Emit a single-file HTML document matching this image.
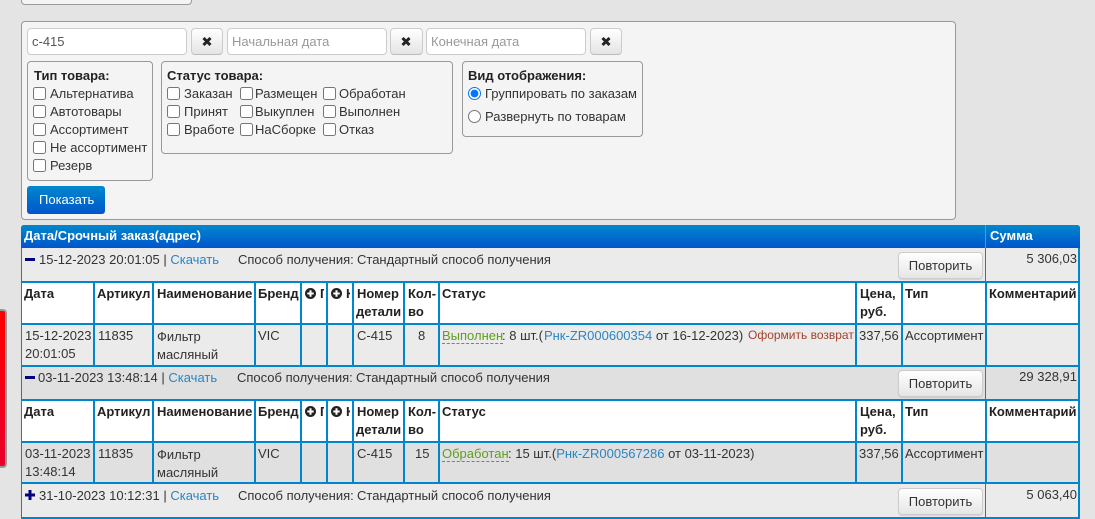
<!DOCTYPE html>
<html lang="ru"><head><meta charset="utf-8"><title>Заказы</title>
<style>
html,body{margin:0;padding:0}
body{width:1095px;height:519px;overflow:hidden;position:relative;background:#e4e4e4;font:13px/18px "Liberation Sans",Arial,sans-serif;color:#333}
div,span.t,a.t,b.t,input,svg{position:absolute}
.t{white-space:nowrap;position:absolute}
b.t{color:#222}
.box{box-sizing:border-box;border:1px solid #999;border-radius:4px;background:#f4f4f4}
.in{box-sizing:border-box;top:28px;height:27px;border:1px solid #ccc;border-radius:4px;background:#fff;padding-left:4px;line-height:26px;color:#999;white-space:nowrap}
.x{box-sizing:border-box;top:28px;height:27px;border:1px solid #ccc;border-bottom-color:#bbb;border-radius:4px;background:linear-gradient(#fff,#e4e4e4)}
.x svg{left:9px;top:7px}
input{margin:0;width:13px;height:13px}
.bl{background:linear-gradient(#0088cc,#0055cc)}
.c{background:#fff}
.rep{box-sizing:border-box;left:898px;width:85px;height:27px;border:1px solid #ccc;border-radius:4px;background:linear-gradient(#fff,#e6e6e6);text-align:center;line-height:25px;color:#333;box-shadow:0 1px 1px rgba(0,0,0,.1)}
a{color:#2a85c4;text-decoration:none}
.g{color:#5f9e1e;border-bottom:1px dashed #5f9e1e;line-height:15px;height:15px}
.sum{right:18px;text-align:right}
</style></head><body>

<div class="box" style="left:21px;top:-20px;width:171px;height:25px"></div>
<div style="left:0;top:309px;width:7px;height:159px;box-sizing:border-box;border:2px solid #999;border-left:0;border-radius:0 4px 4px 0;background:linear-gradient(#ff0000,#e8002c)"></div>

<div class="box" style="left:21px;top:21px;width:935px;height:199px"></div>
<div class="in" style="left:27px;width:160px;color:#555">c-415</div>
<div class="x" style="left:191px;width:32px"><svg width="12" height="11" viewBox="0 0 12 11"><path d="M2.5 2l7 7M9.5 2l-7 7" stroke="#222" stroke-width="3" fill="none"/></svg></div>
<div class="in" style="left:227px;width:160px">Начальная дата</div>
<div class="x" style="left:390px;width:33px"><svg width="12" height="11" viewBox="0 0 12 11"><path d="M2.5 2l7 7M9.5 2l-7 7" stroke="#222" stroke-width="3" fill="none"/></svg></div>
<div class="in" style="left:426px;width:160px">Конечная дата</div>
<div class="x" style="left:590px;width:32px"><svg width="12" height="11" viewBox="0 0 12 11"><path d="M2.5 2l7 7M9.5 2l-7 7" stroke="#222" stroke-width="3" fill="none"/></svg></div>

<div class="box" style="left:27px;top:61px;width:126px;height:120px"></div>
<b class="t" style="left:34px;top:67px">Тип товара:</b>
<input type="checkbox" style="left:33px;top:87px"><span class="t" style="left:50px;top:85px">Альтернатива</span>
<input type="checkbox" style="left:33px;top:105px"><span class="t" style="left:50px;top:103px">Автотовары</span>
<input type="checkbox" style="left:33px;top:123px"><span class="t" style="left:50px;top:121px">Ассортимент</span>
<input type="checkbox" style="left:33px;top:141px"><span class="t" style="left:50px;top:139px">Не ассортимент</span>
<input type="checkbox" style="left:33px;top:159px"><span class="t" style="left:50px;top:157px">Резерв</span>

<div class="box" style="left:161px;top:61px;width:292px;height:93px"></div>
<b class="t" style="left:167px;top:67px">Статус товара:</b>
<input type="checkbox" style="left:167px;top:87px"><span class="t" style="left:184px;top:85px">Заказан</span>
<input type="checkbox" style="left:240px;top:87px"><span class="t" style="left:255px;top:85px">Размещен</span>
<input type="checkbox" style="left:323px;top:87px"><span class="t" style="left:339px;top:85px">Обработан</span>
<input type="checkbox" style="left:167px;top:105px"><span class="t" style="left:184px;top:103px">Принят</span>
<input type="checkbox" style="left:240px;top:105px"><span class="t" style="left:255px;top:103px">Выкуплен</span>
<input type="checkbox" style="left:323px;top:105px"><span class="t" style="left:339px;top:103px">Выполнен</span>
<input type="checkbox" style="left:167px;top:123px"><span class="t" style="left:184px;top:121px">Вработе</span>
<input type="checkbox" style="left:240px;top:123px"><span class="t" style="left:255px;top:121px">НаСборке</span>
<input type="checkbox" style="left:323px;top:123px"><span class="t" style="left:339px;top:121px">Отказ</span>

<div class="box" style="left:462px;top:61px;width:181px;height:76px"></div>
<b class="t" style="left:468px;top:67px">Вид отображения:</b>
<input type="radio" name="v" checked style="left:468px;top:87px"><span class="t" style="left:485px;top:85px">Группировать по заказам</span>
<input type="radio" name="v" style="left:468px;top:110px"><span class="t" style="left:485px;top:108px">Развернуть по товарам</span>

<div class="bl" style="left:27px;top:186px;width:78px;height:28px;border-radius:3px"></div>
<span class="t" style="left:39px;top:191px;color:#fff">Показать</span>

<!-- table -->
<div style="left:21px;top:225px;width:1059px;height:294px;background:#0086cb;border-radius:3px 3px 0 0"></div>
<div class="bl" style="left:21px;top:225px;width:1059px;height:23px;border-radius:3px 3px 0 0"></div>
<div style="left:985px;top:225px;width:1px;height:23px;background:#3aa0dc"></div>
<b class="t" style="left:24px;top:227px;color:#fff">Дата/Срочный заказ(адрес)</b>
<b class="t" style="left:990px;top:227px;color:#fff">Сумма</b>

<!-- group 1 -->
<div style="left:22px;top:248px;width:963px;height:33px;background:#ebebeb"></div>
<div style="left:986px;top:248px;width:92px;height:33px;background:#ebebeb"></div>
<div style="left:25px;top:258px;width:10px;height:3px;background:#000080"></div>
<span class="t" style="left:39px;top:251px">15-12-2023 20:01:05 | <a href="#">Скачать</a></span>
<span class="t" style="left:238px;top:251px">Способ получения:</span>
<span class="t" style="left:357px;top:251px">Стандартный способ получения</span>
<div class="rep" style="top:252px">Повторить</div>
<span class="t sum" style="top:250px">5 306,03</span>

<div class="c" style="left:22px;top:283px;width:71px;height:40px"></div>
<div class="c" style="left:95px;top:283px;width:57px;height:40px"></div>
<div class="c" style="left:154px;top:283px;width:100px;height:40px"></div>
<div class="c" style="left:256px;top:283px;width:44px;height:40px"></div>
<div class="c" style="left:302px;top:283px;width:24px;height:40px"></div>
<div class="c" style="left:328px;top:283px;width:24px;height:40px"></div>
<div class="c" style="left:354px;top:283px;width:49px;height:40px"></div>
<div class="c" style="left:405px;top:283px;width:33px;height:40px"></div>
<div class="c" style="left:440px;top:283px;width:415px;height:40px"></div>
<div class="c" style="left:857px;top:283px;width:44px;height:40px"></div>
<div class="c" style="left:903px;top:283px;width:82px;height:40px"></div>
<div class="c" style="left:987px;top:283px;width:91px;height:40px"></div>
<b class="t" style="left:24px;top:285px">Дата</b>
<b class="t" style="left:97px;top:285px">Артикул</b>
<b class="t" style="left:157px;top:285px">Наименование</b>
<b class="t" style="left:258px;top:285px">Бренд</b>
<svg style="left:305px;top:288px" width="11" height="11" viewBox="0 0 12 12"><circle cx="6" cy="6" r="6" fill="#222"/><path d="M6 2.5v7M2.5 6h7" stroke="#fff" stroke-width="2.2"/></svg>
<div style="left:320px;top:285px;width:4px;height:18px;overflow:hidden"><b class="t" style="left:0;top:0">Г</b></div>
<svg style="left:331px;top:288px" width="11" height="11" viewBox="0 0 12 12"><circle cx="6" cy="6" r="6" fill="#222"/><path d="M6 2.5v7M2.5 6h7" stroke="#fff" stroke-width="2.2"/></svg>
<div style="left:346px;top:285px;width:4px;height:18px;overflow:hidden"><b class="t" style="left:0;top:0">К</b></div>
<b class="t" style="left:357px;top:285px">Номер</b><b class="t" style="left:356px;top:303px">детали</b>
<b class="t" style="left:408px;top:285px">Кол-</b><b class="t" style="left:408px;top:303px">во</b>
<b class="t" style="left:442px;top:285px">Статус</b>
<b class="t" style="left:860px;top:285px">Цена,</b><b class="t" style="left:860px;top:303px">руб.</b>
<b class="t" style="left:905px;top:285px">Тип</b>
<b class="t" style="left:989px;top:285px">Комментарий</b>

<div style="left:22px;top:325px;width:71px;height:40px;background:#ebebeb"></div>
<div style="left:95px;top:325px;width:57px;height:40px;background:#ebebeb"></div>
<div style="left:154px;top:325px;width:100px;height:40px;background:#ebebeb"></div>
<div style="left:256px;top:325px;width:44px;height:40px;background:#ebebeb"></div>
<div style="left:302px;top:325px;width:24px;height:40px;background:#ebebeb"></div>
<div style="left:328px;top:325px;width:24px;height:40px;background:#ebebeb"></div>
<div style="left:354px;top:325px;width:49px;height:40px;background:#ebebeb"></div>
<div style="left:405px;top:325px;width:33px;height:40px;background:#ebebeb"></div>
<div style="left:440px;top:325px;width:415px;height:40px;background:#ebebeb"></div>
<div style="left:857px;top:325px;width:44px;height:40px;background:#ebebeb"></div>
<div style="left:903px;top:325px;width:82px;height:40px;background:#ebebeb"></div>
<div style="left:987px;top:325px;width:91px;height:40px;background:#ebebeb"></div>
<span class="t" style="left:25px;top:327px">15-12-2023</span><span class="t" style="left:25px;top:345px">20:01:05</span>
<span class="t" style="left:98px;top:327px">11835</span>
<span class="t" style="left:157px;top:328px">Фильтр</span><span class="t" style="left:157px;top:346px">масляный</span>
<span class="t" style="left:258px;top:327px">VIC</span>
<span class="t" style="left:357px;top:327px">C-415</span>
<span class="t" style="left:418px;top:327px">8</span>
<span class="t g" style="left:442px;top:328px">Выполнен</span>
<span class="t" style="left:502px;top:327px">: 8 шт.(<a href="#" style="margin-left:1px">Рнк-ZR000600354</a> от 16-12-2023)</span>
<span class="t" style="left:748px;top:326px;font-size:12px;color:#a5402a">Оформить возврат</span>
<span class="t" style="left:859px;top:327px">337,56</span>
<span class="t" style="left:905px;top:327px">Ассортимент</span>

<!-- group 2 -->
<div style="left:22px;top:367px;width:963px;height:32px;background:#e0e0e0"></div>
<div style="left:986px;top:367px;width:92px;height:32px;background:#e0e0e0"></div>
<div style="left:25px;top:376px;width:10px;height:3px;background:#000080"></div>
<span class="t" style="left:38px;top:369px">03-11-2023 13:48:14 | <a href="#">Скачать</a></span>
<span class="t" style="left:237px;top:369px">Способ получения:</span>
<span class="t" style="left:356px;top:369px">Стандартный способ получения</span>
<div class="rep" style="top:370px">Повторить</div>
<span class="t sum" style="top:368px">29 328,91</span>

<div class="c" style="left:22px;top:401px;width:71px;height:40px"></div>
<div class="c" style="left:95px;top:401px;width:57px;height:40px"></div>
<div class="c" style="left:154px;top:401px;width:100px;height:40px"></div>
<div class="c" style="left:256px;top:401px;width:44px;height:40px"></div>
<div class="c" style="left:302px;top:401px;width:24px;height:40px"></div>
<div class="c" style="left:328px;top:401px;width:24px;height:40px"></div>
<div class="c" style="left:354px;top:401px;width:49px;height:40px"></div>
<div class="c" style="left:405px;top:401px;width:33px;height:40px"></div>
<div class="c" style="left:440px;top:401px;width:415px;height:40px"></div>
<div class="c" style="left:857px;top:401px;width:44px;height:40px"></div>
<div class="c" style="left:903px;top:401px;width:82px;height:40px"></div>
<div class="c" style="left:987px;top:401px;width:91px;height:40px"></div>
<b class="t" style="left:24px;top:403px">Дата</b>
<b class="t" style="left:97px;top:403px">Артикул</b>
<b class="t" style="left:157px;top:403px">Наименование</b>
<b class="t" style="left:258px;top:403px">Бренд</b>
<svg style="left:305px;top:406px" width="11" height="11" viewBox="0 0 12 12"><circle cx="6" cy="6" r="6" fill="#222"/><path d="M6 2.5v7M2.5 6h7" stroke="#fff" stroke-width="2.2"/></svg>
<div style="left:320px;top:403px;width:4px;height:18px;overflow:hidden"><b class="t" style="left:0;top:0">Г</b></div>
<svg style="left:331px;top:406px" width="11" height="11" viewBox="0 0 12 12"><circle cx="6" cy="6" r="6" fill="#222"/><path d="M6 2.5v7M2.5 6h7" stroke="#fff" stroke-width="2.2"/></svg>
<div style="left:346px;top:403px;width:4px;height:18px;overflow:hidden"><b class="t" style="left:0;top:0">К</b></div>
<b class="t" style="left:357px;top:403px">Номер</b><b class="t" style="left:356px;top:421px">детали</b>
<b class="t" style="left:408px;top:403px">Кол-</b><b class="t" style="left:408px;top:421px">во</b>
<b class="t" style="left:442px;top:403px">Статус</b>
<b class="t" style="left:860px;top:403px">Цена,</b><b class="t" style="left:860px;top:421px">руб.</b>
<b class="t" style="left:905px;top:403px">Тип</b>
<b class="t" style="left:989px;top:403px">Комментарий</b>

<div style="left:22px;top:443px;width:71px;height:39px;background:#e0e0e0"></div>
<div style="left:95px;top:443px;width:57px;height:39px;background:#e0e0e0"></div>
<div style="left:154px;top:443px;width:100px;height:39px;background:#e0e0e0"></div>
<div style="left:256px;top:443px;width:44px;height:39px;background:#e0e0e0"></div>
<div style="left:302px;top:443px;width:24px;height:39px;background:#e0e0e0"></div>
<div style="left:328px;top:443px;width:24px;height:39px;background:#e0e0e0"></div>
<div style="left:354px;top:443px;width:49px;height:39px;background:#e0e0e0"></div>
<div style="left:405px;top:443px;width:33px;height:39px;background:#e0e0e0"></div>
<div style="left:440px;top:443px;width:415px;height:39px;background:#e0e0e0"></div>
<div style="left:857px;top:443px;width:44px;height:39px;background:#e0e0e0"></div>
<div style="left:903px;top:443px;width:82px;height:39px;background:#e0e0e0"></div>
<div style="left:987px;top:443px;width:91px;height:39px;background:#e0e0e0"></div>
<span class="t" style="left:25px;top:445px">03-11-2023</span><span class="t" style="left:25px;top:463px">13:48:14</span>
<span class="t" style="left:98px;top:445px">11835</span>
<span class="t" style="left:157px;top:446px">Фильтр</span><span class="t" style="left:157px;top:464px">масляный</span>
<span class="t" style="left:258px;top:445px">VIC</span>
<span class="t" style="left:357px;top:445px">C-415</span>
<span class="t" style="left:415px;top:445px">15</span>
<span class="t g" style="left:442px;top:446px">Обработан</span>
<span class="t" style="left:508px;top:445px">: 15 шт.(<a href="#">Рнк-ZR000567286</a> от 03-11-2023)</span>
<span class="t" style="left:859px;top:445px">337,56</span>
<span class="t" style="left:905px;top:445px">Ассортимент</span>

<!-- group 3 -->
<div style="left:22px;top:484px;width:963px;height:33px;background:#ebebeb"></div>
<div style="left:986px;top:484px;width:92px;height:33px;background:#ebebeb"></div>
<svg style="left:25px;top:490px" width="10" height="10" viewBox="0 0 10 10"><path d="M5 0v10M0 5h10" stroke="#000080" stroke-width="3"/></svg>
<span class="t" style="left:39px;top:487px">31-10-2023 10:12:31 | <a href="#">Скачать</a></span>
<span class="t" style="left:238px;top:487px">Способ получения:</span>
<span class="t" style="left:357px;top:487px">Стандартный способ получения</span>
<div class="rep" style="top:488px">Повторить</div>
<span class="t sum" style="top:486px">5 063,40</span>

</body></html>
